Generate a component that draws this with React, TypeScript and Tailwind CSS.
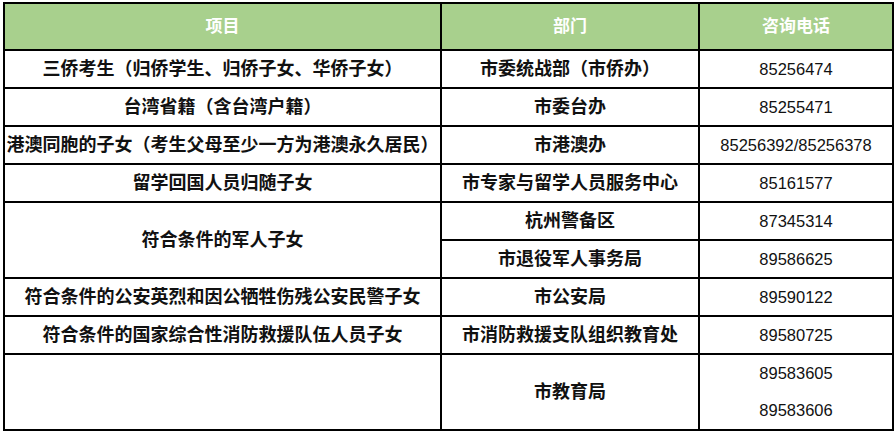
import React from 'react';

type Row = {
  item?: string;
  spanItem?: boolean;
  skipItem?: boolean;
  dept: string;
  phones: string[];
};

const rows: Row[] = [
  { item: '三侨考生（归侨学生、归侨子女、华侨子女）', dept: '市委统战部（市侨办）', phones: ['85256474'] },
  { item: '台湾省籍（含台湾户籍）', dept: '市委台办', phones: ['85255471'] },
  { item: '港澳同胞的子女（考生父母至少一方为港澳永久居民）', dept: '市港澳办', phones: ['85256392/85256378'] },
  { item: '留学回国人员归随子女', dept: '市专家与留学人员服务中心', phones: ['85161577'] },
  { item: '符合条件的军人子女', spanItem: true, dept: '杭州警备区', phones: ['87345314'] },
  { skipItem: true, dept: '市退役军人事务局', phones: ['89586625'] },
  { item: '符合条件的公安英烈和因公牺牲伤残公安民警子女', dept: '市公安局', phones: ['89590122'] },
  { item: '符合条件的国家综合性消防救援队伍人员子女', dept: '市消防救援支队组织教育处', phones: ['89580725'] },
  { item: '', dept: '市教育局', phones: ['89583605', '89583606'] },
];

const head = 'bg-[#a8d08d] flex items-center justify-center text-white font-bold text-[17px]';
const cell = 'bg-white flex items-center justify-center whitespace-nowrap text-[#111]';

export default function App() {
  return (
    <div className="w-[896px] h-[433px] overflow-hidden bg-white pl-[3px] pt-[2px] font-['Liberation_Sans','Noto_Sans_CJK_SC',sans-serif]">
      <div className="grid w-[891px] grid-cols-[435px_256px_192px] grid-rows-[45px_repeat(8,36px)_74px] gap-[2px] bg-black p-[2px]">
        <div className={head}>项目</div>
        <div className={head}>部门</div>
        <div className={head}>咨询电话</div>
        {rows.map((r, i) => (
          <React.Fragment key={i}>
            {!r.skipItem && (
              <div className={`${cell} text-[18px] font-bold ${r.spanItem ? 'row-span-2' : ''}`}>{r.item}</div>
            )}
            <div className={`${cell} text-[18px] font-bold`}>{r.dept}</div>
            <div className={`${cell} flex-col text-[16.5px]`}>
              {r.phones.map((p) => (
                <div key={p} className="h-[37px] leading-[37px]">{p}</div>
              ))}
            </div>
          </React.Fragment>
        ))}
      </div>
    </div>
  );
}
